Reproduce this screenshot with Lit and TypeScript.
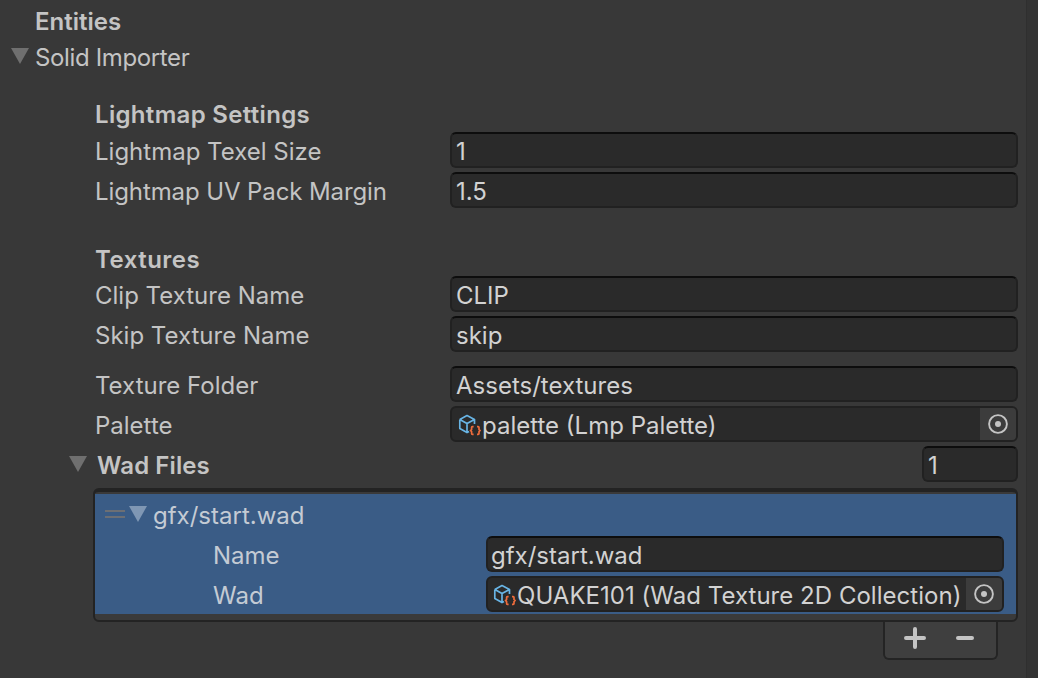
import { LitElement, html, css } from "lit";
import { customElement } from "lit/decorators.js";

const objIcon = html`<svg class="obj" width="25" height="26" viewBox="0 0 25 26" fill="none">
  <path d="M2.8 8.5 L10 4.6 L17.5 8.5 V13 M2.8 8.5 V17.5 L10 21.6 L12 20.5 M2.8 8.5 L10 12.6 L17.5 8.5 M10 12.6 V21.6" stroke="#68b4e4" stroke-width="1.7" stroke-linejoin="round"/>
  <path d="M16.6 15.6 H15.4 Q14.6 15.6 14.6 16.4 V18.4 L13.6 19.5 L14.6 20.6 V22.6 Q14.6 23.4 15.4 23.4 H16.6 M20 15.6 H21.2 Q22 15.6 22 16.4 V18.4 L23 19.5 L22 20.6 V22.6 Q22 23.4 21.2 23.4 H20" stroke="#ee6c3c" stroke-width="1.7"/>
</svg>`;

const picker = html`<span class="pick"><svg width="20" height="20" viewBox="0 0 20 20" fill="none">
  <circle cx="10" cy="10" r="8.9" stroke="#c4c4c4" stroke-width="1.9"/><circle cx="10" cy="10" r="3" fill="#c4c4c4"/>
</svg></span>`;

@customElement("app-root")
export class AppRoot extends LitElement {
  static styles = css`
    :host {
      display: block;
      width: 1038px;
      height: 678px;
      overflow: hidden;
      background: #383838;
      font-family: Inter, "Noto Sans", sans-serif;
      font-size: 24px;
      color: #c4c4c4;
    }
    .page { display: flex; height: 678px; }
    .main { flex: 0 0 1026px; width: 1026px; padding-top: 2px; box-sizing: border-box; }
    .strip { flex: 1; background: #333333; border-left: 1px solid #2f2f2f; }
    .row { display: flex; align-items: center; height: 36px; white-space: nowrap; }
    .t { display: block; padding-top: 2px; }
    .top { padding-left: 35px; }
    .tight { letter-spacing: -0.36px; }
    .tight2 { letter-spacing: -0.1px; }
    .tri { width: 0; height: 0; flex: none; border-left: 9px solid transparent; border-right: 9px solid transparent; border-top: 16px solid #6f6f6f; }
    .tri.first { margin-left: -24px; margin-right: 6px; }
    .sec { padding-left: 95px; padding-right: 8px; }
    .b { font-weight: 600; }
    .wide { letter-spacing: 0.32px; }
    .wider { letter-spacing: 0.5px; }
    .label { width: 355px; flex: none; }
    .field {
      flex: 1; min-width: 0; height: 36px; box-sizing: border-box; display: flex; align-items: center;
      background: #2a2a2a; border: 2px solid #212121; border-top-color: #0d0d0d; border-radius: 6px; padding-left: 4px; color: #d2d2d2;
    }
    .obj-field { padding-left: 5px; border-top-color: #212121; overflow: hidden; }
    .obj { flex: none; }
    .pick { margin-left: auto; width: 36px; height: 32px; background: #3c3c3c; display: flex; align-items: center; justify-content: center; flex: none; }
    .g4 { margin-top: 4px; }
    .g14 { margin-top: 14px; }
    .g22 { margin-top: 22px; }
    .g32 { margin-top: 32px; }
    .wad-tri { margin-left: 69px; margin-right: 10px; }
    .wad { padding-right: 8px; }
    .wad .name { flex: 1; letter-spacing: 0.1px; }
    .count { flex: 0 0 96px; width: 96px; }
    .list {
      margin: 6px 8px 0 93px; height: 134px; box-sizing: border-box; border: 2px solid #232323; border-top-width: 4px; border-radius: 6px;
      background: #3a3a3a; padding: 2px 0 6px 0;
    }
    .item { background: #3a5c86; height: 120px; padding-top: 2px; box-sizing: border-box; color: #c4cbd4; }
    .handle { width: 20px; margin-left: 10px; margin-right: 4px; height: 8px; flex: none; border-top: 2px solid #6c6f74; border-bottom: 2px solid #6c6f74; box-sizing: border-box; }
    .item .tri { border-top-color: #7f97b4; margin-right: 6px; }
    .sub { padding-left: 118px; padding-right: 12px; margin-top: 4px; }
    .sub .label { width: 273px; }
    .sub .field { padding-left: 3px; }
    .sub .obj-field { padding-left: 4px; color: #d2d2d2; }
    .sub .obj-field .t { letter-spacing: 0.03px; }
    .foot {
      margin: 0 28px 0 auto; width: 115px; height: 38px; box-sizing: border-box; background: #3f3f3f;
      border: 2px solid #242424; border-top: none; border-radius: 0 0 6px 6px; display: flex; align-items: center; gap: 30px; padding: 0 0 4px 19px;
    }
    .ctl { display: block; flex: none; }
  `;

  render() {
    return html`<div class="page">
      <div class="main">
        <div class="row top b"><span class="t">Entities</span></div>
        <div class="row top"><span class="tri first"></span><span class="t tight">Solid Importer</span></div>

        <div class="row sec b wide g22">Lightmap Settings</div>
        <div class="row sec"><span class="label t">Lightmap Texel Size</span><span class="field"><span class="t">1</span></span></div>
        <div class="row sec g4"><span class="label t tight2">Lightmap UV Pack Margin</span><span class="field"><span class="t">1.5</span></span></div>

        <div class="row sec b wider g32"><span class="t">Textures</span></div>
        <div class="row sec"><span class="label t">Clip Texture Name</span><span class="field"><span class="t">CLIP</span></span></div>
        <div class="row sec g4"><span class="label t">Skip Texture Name</span><span class="field"><span class="t">skip</span></span></div>
        <div class="row sec g14"><span class="label t">Texture Folder</span><span class="field"><span class="t">Assets/textures</span></span></div>
        <div class="row sec g4"><span class="label t">Palette</span><span class="field obj-field">${objIcon}<span class="t">palette (Lmp Palette)</span>${picker}</span></div>

        <div class="row wad g4"><span class="tri wad-tri"></span><span class="name b t">Wad Files</span><span class="field count"><span class="t">1</span></span></div>

        <div class="list">
          <div class="item">
            <div class="row"><span class="handle"></span><span class="tri"></span><span class="t">gfx/start.wad</span></div>
            <div class="row sub"><span class="label t">Name</span><span class="field"><span class="t">gfx/start.wad</span></span></div>
            <div class="row sub"><span class="label t">Wad</span><span class="field obj-field">${objIcon}<span class="t">QUAKE101 (Wad Texture 2D Collection)</span>${picker}</span></div>
          </div>
        </div>
        <div class="foot">
          <svg class="ctl" width="22" height="22" viewBox="0 0 22 22"><path d="M11 2V20M2 11H20" stroke="#c4c4c4" stroke-width="4" stroke-linecap="round"/></svg>
          <svg class="ctl" width="18" height="6" viewBox="0 0 18 6"><path d="M2 3H16" stroke="#c4c4c4" stroke-width="4" stroke-linecap="round"/></svg>
        </div>
      </div>
      <div class="strip"></div>
    </div>`;
  }
}
